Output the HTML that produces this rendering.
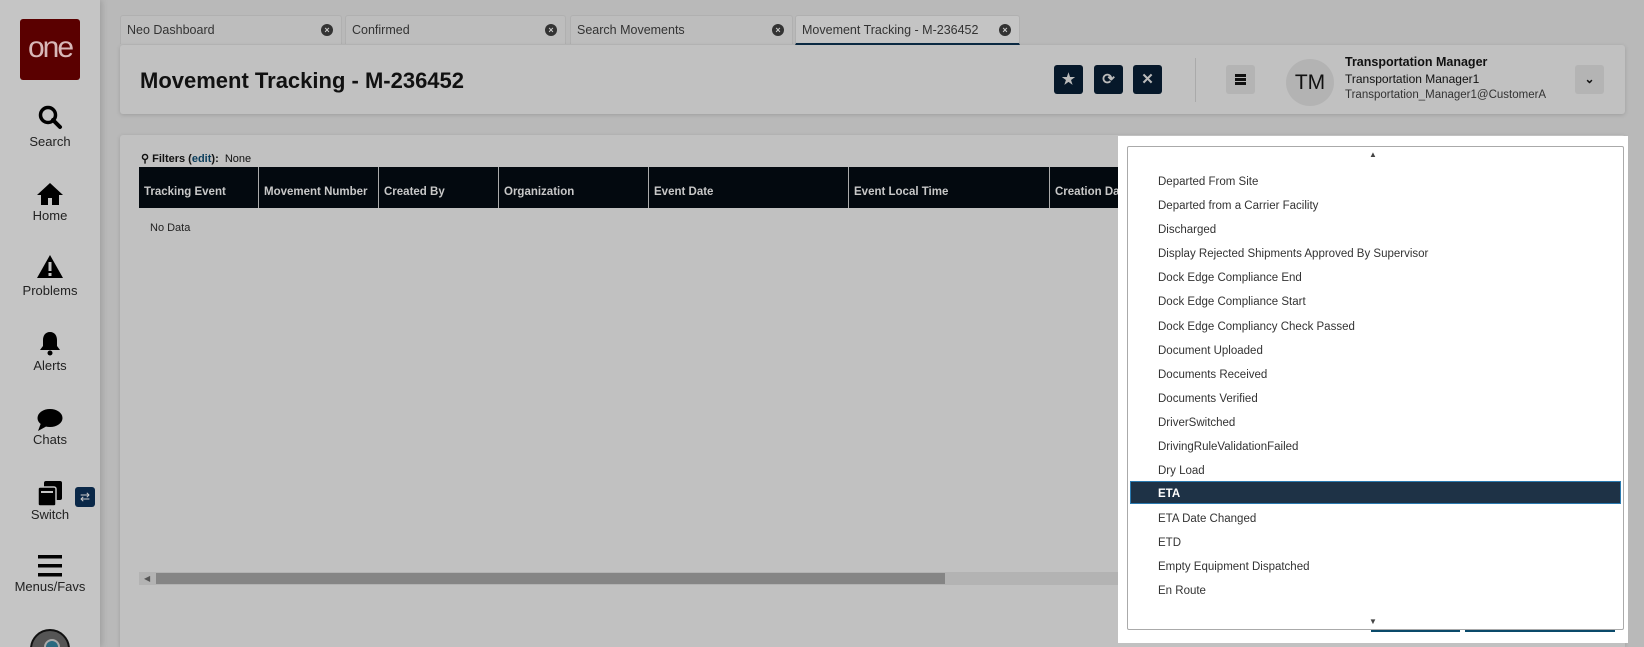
<!DOCTYPE html>
<html><head><meta charset="utf-8"><style>
*{box-sizing:border-box;margin:0;padding:0}
html,body{width:1644px;height:647px;overflow:hidden;background:#b9b9b9;font-family:"Liberation Sans",sans-serif;position:relative;color:#111}
.a{position:absolute}
.side{left:0;top:0;width:100px;height:647px;background:#c5c5c5;box-shadow:2px 0 6px rgba(0,0,0,.15);overflow:hidden}
.logo{left:20px;top:19px;width:60px;height:61px;background:#5a0000;border-radius:3px;color:#d8b8b8;font-size:30px;text-align:center;line-height:58px;letter-spacing:-2px}
.nl{width:100px;text-align:center;font-size:13px;color:#222}
.tab{top:15px;height:29px;background:#bdbdbd;border:1px solid #b0b0b0;border-bottom:none;border-radius:3px 3px 0 0;font-size:12.5px;color:#333;padding:7px 6px}
.tab .x{position:absolute;right:8px;top:8px;width:12px;height:12px;border-radius:50%;background:#333;color:#ccc;font-size:9px;line-height:12px;text-align:center;font-weight:bold}
.card{background:#c1c1c1;border-radius:3px;box-shadow:0 1px 4px rgba(0,0,0,.15)}
.btn{top:65px;width:29px;height:29px;background:#06182a;border-radius:3px;color:#bbb;text-align:center;line-height:29px;font-size:15px;font-weight:bold}
.th{top:167px;height:41px;background:#03090f;color:#c8c8c8;font-size:11.5px;font-weight:bold;line-height:12px;padding:19px 0 0 5px;border-right:1px solid #aaa}
.it{left:1158px;font-size:11.5px;color:#333}
</style></head><body>
<div class="a side"><div class="a" style="left:30px;top:629px;width:40px;height:40px;border-radius:50%;background:#555;border:2px solid #111"><div style="margin:8px 0 0 12px;width:16px;height:16px;border-radius:50%;background:#2a6a80;border:2px solid #aaa"></div></div></div>
<div class="a logo">one</div>
<svg class="a" style="left:37px;top:104px" width="26" height="26" viewBox="0 0 26 26"><circle cx="11" cy="11" r="7.5" fill="none" stroke="#000" stroke-width="3.5"/><path d="M16 16l7 7" stroke="#000" stroke-width="4" stroke-linecap="round"/></svg>
<div class="a nl" style="top:134px">Search</div>
<svg class="a" style="left:36px;top:182px" width="28" height="24" viewBox="0 0 28 24"><path d="M14 1L1 13h4v10h7v-7h4v7h7V13h4z" fill="#000"/></svg>
<div class="a nl" style="top:208px">Home</div>
<svg class="a" style="left:36px;top:254px" width="28" height="25" viewBox="0 0 28 25"><path d="M14 1L1 24h26z" fill="#000"/><rect x="12.5" y="8" width="3" height="9" fill="#c5c5c5"/><rect x="12.5" y="19" width="3" height="3" fill="#c5c5c5"/></svg>
<div class="a nl" style="top:283px">Problems</div>
<svg class="a" style="left:38px;top:330px" width="24" height="26" viewBox="0 0 24 26"><path d="M12 2c-5 0-7 4-7 8v6l-3 4h20l-3-4v-6c0-4-2-8-7-8z" fill="#000"/><circle cx="12" cy="23" r="2.5" fill="#000"/></svg>
<div class="a nl" style="top:358px">Alerts</div>
<svg class="a" style="left:36px;top:408px" width="28" height="24" viewBox="0 0 28 24"><ellipse cx="14" cy="10" rx="12.5" ry="9" fill="#000"/><path d="M5 15l-3 8 9-5z" fill="#000"/></svg>
<div class="a nl" style="top:432px">Chats</div>
<svg class="a" style="left:37px;top:480px" width="26" height="27" viewBox="0 0 26 27"><rect x="7" y="1" width="18" height="19" rx="2" fill="#000"/><rect x="1" y="7" width="18" height="19" rx="2" fill="#000" stroke="#c5c5c5" stroke-width="1.5"/><rect x="4" y="11" width="12" height="2" fill="#c5c5c5"/></svg>
<div class="a" style="left:75px;top:487px;width:20px;height:20px;background:#0a2848;border-radius:3px;color:#ccc;font-size:12px;text-align:center;line-height:20px">⇄</div>
<div class="a nl" style="top:507px">Switch</div>
<svg class="a" style="left:38px;top:555px" width="24" height="22" viewBox="0 0 24 22"><rect y="0" width="24" height="3.5" fill="#000"/><rect y="9" width="24" height="3.5" fill="#000"/><rect y="18" width="24" height="3.5" fill="#000"/></svg>
<div class="a nl" style="top:579px">Menus/Favs</div>

<div class="a tab" style="left:120px;width:222px">Neo Dashboard<span class="x">×</span></div>
<div class="a tab" style="left:345px;width:221px">Confirmed<span class="x">×</span></div>
<div class="a tab" style="left:570px;width:223px">Search Movements<span class="x">×</span></div>
<div class="a tab" style="left:795px;width:225px;background:#c4c4c4;border-bottom:2px solid #0b2a44;height:30px">Movement Tracking - M-236452<span class="x">×</span></div>

<div class="a card" style="left:120px;top:45px;width:1505px;height:69px"></div>
<div class="a" style="left:140px;top:68px;font-size:22px;font-weight:bold;color:#111">Movement Tracking - M-236452</div>
<div class="a btn" style="left:1054px">★</div>
<div class="a btn" style="left:1094px">⟳</div>
<div class="a btn" style="left:1133px">✕</div>
<div class="a" style="left:1195px;top:58px;width:1px;height:44px;background:#aaa"></div>
<div class="a" style="left:1226px;top:65px;width:29px;height:29px;background:#b4b4b4;border-radius:3px"><div style="margin:9px 0 0 9px;width:11px;height:11px;border-top:3px solid #111;border-bottom:3px solid #111"><div style="margin-top:1px;height:3px;background:#111"></div></div></div>
<div class="a" style="left:1286px;top:59px;width:48px;height:47px;border-radius:50%;background:#b3b3b3;font-size:21px;text-align:center;line-height:47px;color:#111">TM</div>
<div class="a" style="left:1345px;top:55px;font-size:12.5px;font-weight:bold">Transportation Manager</div>
<div class="a" style="left:1345px;top:72px;font-size:12px">Transportation Manager1</div>
<div class="a" style="left:1345px;top:89px;font-size:11.5px;color:#333">Transportation_Manager1@CustomerA</div>
<div class="a" style="left:1575px;top:65px;width:29px;height:29px;background:#b4b4b4;border-radius:3px;text-align:center;line-height:29px;font-size:12px;font-weight:bold">⌄</div>

<div class="a card" style="left:120px;top:135px;width:1505px;height:512px;border-radius:3px 3px 0 0"></div>
<div class="a" style="left:141px;top:152px;font-size:11px"><b>⚲ Filters (<span style="color:#0a3d5c">edit</span>):</b>&nbsp; None</div>
<div class="a th" style="left:139px;width:120px">Tracking Event</div>
<div class="a th" style="left:259px;width:120px">Movement Number</div>
<div class="a th" style="left:379px;width:120px">Created By</div>
<div class="a th" style="left:499px;width:150px">Organization</div>
<div class="a th" style="left:649px;width:200px">Event Date</div>
<div class="a th" style="left:849px;width:201px">Event Local Time</div>
<div class="a th" style="left:1050px;width:80px;border:none;overflow:hidden;white-space:nowrap">Creation Date</div>
<div class="a" style="left:150px;top:222px;font-size:11px;color:#222">No Data</div>
<div class="a" style="left:139px;top:572px;width:990px;height:13px;background:#b3b3b3"></div>
<div class="a" style="left:156px;top:573px;width:789px;height:11px;background:#858585"></div>
<div class="a" style="left:144px;top:574px;font-size:8px;color:#555">◀</div>

<div class="a" style="left:1118px;top:136px;width:510px;height:507px;background:#fff"></div>
<div class="a" style="left:1371px;top:626px;width:89px;height:6px;background:#0a4a6a"></div>
<div class="a" style="left:1465px;top:626px;width:150px;height:6px;background:#0a4a6a"></div>
<div class="a" style="left:1127px;top:146px;width:497px;height:484px;background:#fff;border:1px solid #aaa;border-radius:2px"></div>
<div class="a" style="left:1369px;top:150px;font-size:8px;color:#444">▲</div>
<div class="a" style="left:1369px;top:617px;font-size:8px;color:#444">▼</div>
<div class="a" style="left:1130px;top:481px;width:491px;height:23px;background:#1e3246;border:1px solid #2a7ab0"></div>
<div class="a it" style="top:176px">Departed From Site</div>
<div class="a it" style="top:200px">Departed from a Carrier Facility</div>
<div class="a it" style="top:224px">Discharged</div>
<div class="a it" style="top:248px">Display Rejected Shipments Approved By Supervisor</div>
<div class="a it" style="top:272px">Dock Edge Compliance End</div>
<div class="a it" style="top:296px">Dock Edge Compliance Start</div>
<div class="a it" style="top:321px">Dock Edge Compliancy Check Passed</div>
<div class="a it" style="top:345px">Document Uploaded</div>
<div class="a it" style="top:369px">Documents Received</div>
<div class="a it" style="top:393px">Documents Verified</div>
<div class="a it" style="top:417px">DriverSwitched</div>
<div class="a it" style="top:441px">DrivingRuleValidationFailed</div>
<div class="a it" style="top:465px">Dry Load</div>
<div class="a it" style="top:488px;color:#fff;font-weight:bold">ETA</div>
<div class="a it" style="top:513px">ETA Date Changed</div>
<div class="a it" style="top:537px">ETD</div>
<div class="a it" style="top:561px">Empty Equipment Dispatched</div>
<div class="a it" style="top:585px">En Route</div>
</body></html>
